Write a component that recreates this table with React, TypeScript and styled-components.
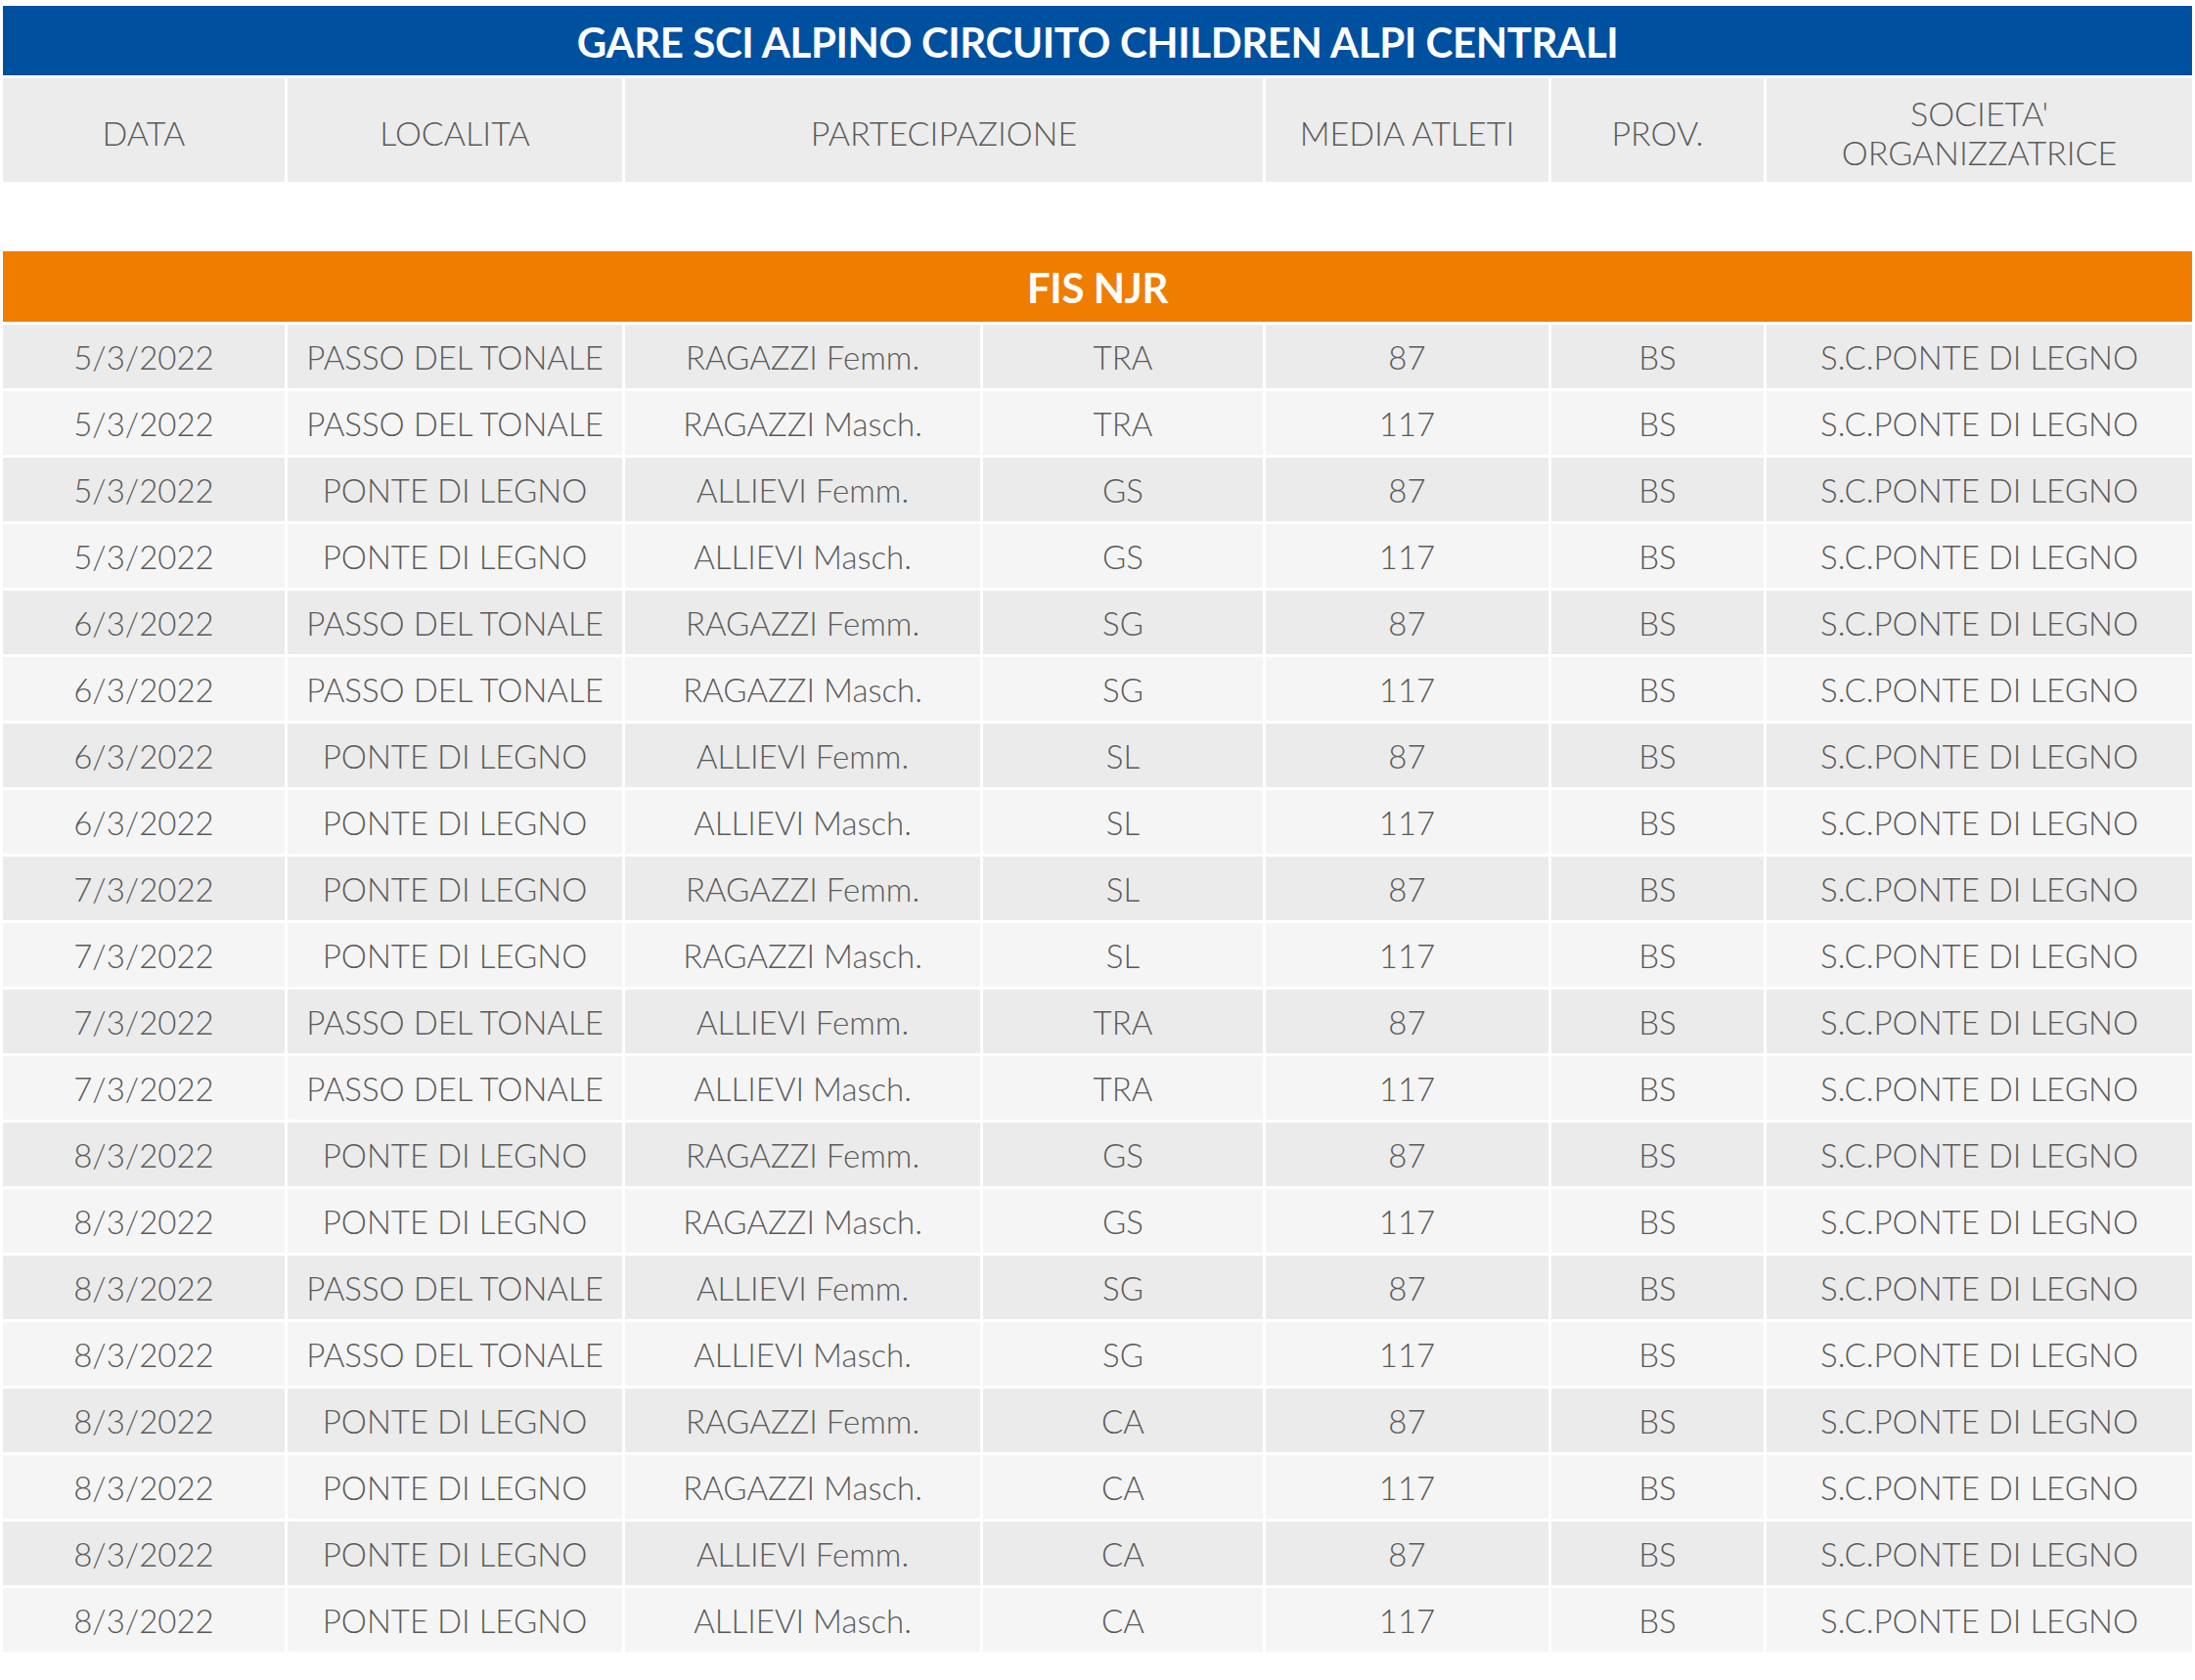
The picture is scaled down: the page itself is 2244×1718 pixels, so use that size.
import React from "react";
import styled, { createGlobalStyle } from "styled-components";

const Global = createGlobalStyle`
  html, body { margin: 0; padding: 0; background: #ffffff; }
  body { font-family: Lato, "Open Sans", "Liberation Sans", sans-serif; }
`;

const COLS = "288px 342px 363px 286px 289px 217px 435px";

const Page = styled.div`
  padding: 6px 3px 0 3px;
  width: 2238px;
`;

const TitleBar = styled.div`
  height: 71px;
  background: #0050a0;
  color: #ffffff;
  font-family: Lato, sans-serif;
  font-weight: 700;
  font-size: 42px;
  letter-spacing: -0.4px;
  display: flex;
  align-items: center;
  justify-content: center;
  padding-top: 3px;
  box-sizing: border-box;
`;

const Grid = styled.div`
  display: grid;
  grid-template-columns: ${COLS};
  column-gap: 3px;
  row-gap: 3px;
  margin-top: 3px;
`;

const HeadCell = styled.div<{ $span?: number }>`
  grid-column: span ${(p) => p.$span ?? 1};
  height: 106px;
  box-sizing: border-box;
  padding-top: 5px;
  background: #ececec;
  color: #5a5a5a;
  font-family: Lato, sans-serif;
  font-weight: 300;
  font-size: 34px;
  line-height: 40px;
  display: flex;
  align-items: center;
  justify-content: center;
  text-align: center;
`;

const SectionBar = styled.div`
  margin-top: 71px;
  height: 72px;
  box-sizing: border-box;
  padding-top: 2px;
  background: #ef7d00;
  color: #ffffff;
  font-family: Lato, sans-serif;
  font-weight: 700;
  font-size: 42px;
  letter-spacing: -0.4px;
  display: flex;
  align-items: center;
  justify-content: center;
`;

const Cell = styled.div<{ $alt: boolean }>`
  height: 65px;
  background: ${(p) => (p.$alt ? "#f5f5f5" : "#ebebeb")};
  color: #5a5a5a;
  font-family: Lato, sans-serif;
  font-weight: 300;
  font-size: 33px;
  display: flex;
  align-items: center;
  justify-content: center;
  white-space: nowrap;
`;

type Row = [string, string, string, string, string];

const rows: Row[] = [
  ["5/3/2022", "PASSO DEL TONALE", "RAGAZZI Femm.", "TRA", "87"],
  ["5/3/2022", "PASSO DEL TONALE", "RAGAZZI Masch.", "TRA", "117"],
  ["5/3/2022", "PONTE DI LEGNO", "ALLIEVI Femm.", "GS", "87"],
  ["5/3/2022", "PONTE DI LEGNO", "ALLIEVI Masch.", "GS", "117"],
  ["6/3/2022", "PASSO DEL TONALE", "RAGAZZI Femm.", "SG", "87"],
  ["6/3/2022", "PASSO DEL TONALE", "RAGAZZI Masch.", "SG", "117"],
  ["6/3/2022", "PONTE DI LEGNO", "ALLIEVI Femm.", "SL", "87"],
  ["6/3/2022", "PONTE DI LEGNO", "ALLIEVI Masch.", "SL", "117"],
  ["7/3/2022", "PONTE DI LEGNO", "RAGAZZI Femm.", "SL", "87"],
  ["7/3/2022", "PONTE DI LEGNO", "RAGAZZI Masch.", "SL", "117"],
  ["7/3/2022", "PASSO DEL TONALE", "ALLIEVI Femm.", "TRA", "87"],
  ["7/3/2022", "PASSO DEL TONALE", "ALLIEVI Masch.", "TRA", "117"],
  ["8/3/2022", "PONTE DI LEGNO", "RAGAZZI Femm.", "GS", "87"],
  ["8/3/2022", "PONTE DI LEGNO", "RAGAZZI Masch.", "GS", "117"],
  ["8/3/2022", "PASSO DEL TONALE", "ALLIEVI Femm.", "SG", "87"],
  ["8/3/2022", "PASSO DEL TONALE", "ALLIEVI Masch.", "SG", "117"],
  ["8/3/2022", "PONTE DI LEGNO", "RAGAZZI Femm.", "CA", "87"],
  ["8/3/2022", "PONTE DI LEGNO", "RAGAZZI Masch.", "CA", "117"],
  ["8/3/2022", "PONTE DI LEGNO", "ALLIEVI Femm.", "CA", "87"],
  ["8/3/2022", "PONTE DI LEGNO", "ALLIEVI Masch.", "CA", "117"],
];

export default function App() {
  return (
    <Page>
      <Global />
      <TitleBar>GARE SCI ALPINO CIRCUITO CHILDREN ALPI CENTRALI</TitleBar>
      <Grid>
        <HeadCell>DATA</HeadCell>
        <HeadCell>LOCALITA</HeadCell>
        <HeadCell $span={2}>PARTECIPAZIONE</HeadCell>
        <HeadCell>MEDIA ATLETI</HeadCell>
        <HeadCell>PROV.</HeadCell>
        <HeadCell>
          SOCIETA'
          <br />
          ORGANIZZATRICE
        </HeadCell>
      </Grid>
      <SectionBar>FIS NJR</SectionBar>
      <Grid>
        {rows.map((r, i) => {
          const alt = i % 2 === 1;
          return (
            <React.Fragment key={i}>
              <Cell $alt={alt}>{r[0]}</Cell>
              <Cell $alt={alt}>{r[1]}</Cell>
              <Cell $alt={alt}>{r[2]}</Cell>
              <Cell $alt={alt}>{r[3]}</Cell>
              <Cell $alt={alt}>{r[4]}</Cell>
              <Cell $alt={alt}>BS</Cell>
              <Cell $alt={alt}>S.C.PONTE DI LEGNO</Cell>
            </React.Fragment>
          );
        })}
      </Grid>
    </Page>
  );
}
